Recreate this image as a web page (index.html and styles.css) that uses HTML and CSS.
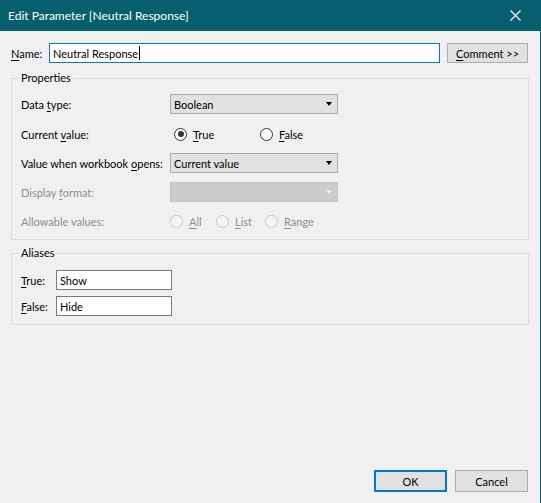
FILE: index.html
```html
<!DOCTYPE html>
<html lang="en">
<head>
  <meta charset="UTF-8">
  <title>Edit Parameter [Neutral Response]</title>
  <link rel="stylesheet" href="styles.css">
</head>
<body>
<div class="dialog">
  <div class="titlebar">
    <div class="title">Edit Parameter [Neutral Response]</div>
    <svg class="close" width="11" height="11" viewBox="0 0 11 11">
      <path d="M0.5 0.5 L10.5 10.5 M10.5 0.5 L0.5 10.5" stroke="#fff" stroke-width="1.1" fill="none"/>
    </svg>
  </div>

  <div class="content">
    <div class="name-row">
      <div class="name-label"><u>N</u>ame:</div>
      <div class="field name-field">Neutral Response<span class="caret"></span></div>
      <div class="btn comment-btn"><u>C</u>omment &gt;&gt;</div>
    </div>

    <fieldset class="group">
      <legend>Properties</legend>
      <div class="prop-row first">
        <div>Data <u>t</u>ype:</div>
        <div class="select"><span>Boolean</span><span class="arrow"></span></div>
      </div>
      <div class="prop-row">
        <div>Current <u>v</u>alue:</div>
        <div class="radios current">
          <div class="radio-opt w86"><span class="radio checked"></span><span><u>T</u>rue</span></div>
          <div class="radio-opt"><span class="radio"></span><span><u>F</u>alse</span></div>
        </div>
      </div>
      <div class="prop-row tight">
        <div>Value when workbook <u>o</u>pens:</div>
        <div class="select"><span>Current value</span><span class="arrow"></span></div>
      </div>
      <div class="prop-row tight disabled">
        <div>Display <u>f</u>ormat:</div>
        <div class="select"><span></span><span class="arrow"></span></div>
      </div>
      <div class="prop-row tight disabled">
        <div>Allowable values:</div>
        <div class="radios">
          <div class="radio-opt w46"><span class="radio"></span><span><u>A</u>ll</span></div>
          <div class="radio-opt w49"><span class="radio"></span><span><u>L</u>ist</span></div>
          <div class="radio-opt"><span class="radio"></span><span><u>R</u>ange</span></div>
        </div>
      </div>
    </fieldset>

    <fieldset class="group aliases">
      <legend>Aliases</legend>
      <div class="alias-row">
        <div><u>T</u>rue:</div>
        <div class="field alias-field">Show</div>
      </div>
      <div class="alias-row">
        <div><u>F</u>alse:</div>
        <div class="field alias-field">Hide</div>
      </div>
    </fieldset>

    <div class="footer">
      <div class="btn dlg-btn default">OK</div>
      <div class="btn dlg-btn">Cancel</div>
    </div>
  </div>
</div>
</body>
</html>
```

FILE: styles.css
```css
body {
  margin: 0;
  background-color: #f0f0f0;
  color: #000;
  font-family: Lato, "Noto Sans", sans-serif;
  font-size: 11px;
}
u {
  text-underline-offset: 2px;
}
.dialog {
  width: 541px;
  height: 503px;
  box-sizing: border-box;
  border-right: 1px solid #075e6e;
  display: flex;
  flex-direction: column;
}
.titlebar {
  height: 31px;
  flex: none;
  background-color: #075e6e;
  color: #fff;
  font-size: 12px;
  display: flex;
  align-items: center;
  justify-content: space-between;
  padding: 0 19px 0 8px;
}
.title {
  margin-top: -1px;
}
.close {
  display: block;
  margin-top: -1px;
}
.content {
  flex: 1;
  display: flex;
  flex-direction: column;
  padding: 12px 11px 11px 11px;
}
.name-row {
  display: flex;
  align-items: center;
  height: 20px;
}
.name-label {
  width: 38px;
}
.field {
  height: 20px;
  box-sizing: border-box;
  background-color: #fff;
  border: 1px solid #7a7a7a;
  padding: 0 3px;
  display: flex;
  align-items: center;
  white-space: nowrap;
}
.name-field {
  width: 391px;
  border-color: #0078d7;
}
.caret {
  display: inline-block;
  width: 1px;
  height: 14px;
  background-color: #000;
  margin-left: 1px;
}
.btn {
  box-sizing: border-box;
  background-color: #e1e1e1;
  border: 1px solid #adadad;
  display: flex;
  align-items: center;
  justify-content: center;
}
.comment-btn {
  width: 81px;
  height: 20px;
  margin-left: 7px;
}
.group {
  margin: 7px 0 0;
  padding: 8px 10px 8px 9px;
  border: 1px solid #dcdcdc;
  min-width: 0;
}
.group legend {
  padding: 0 2px;
  margin-left: -2px;
  line-height: 16px;
}
.prop-row {
  display: grid;
  grid-template-columns: 149px 168px;
  align-items: center;
  height: 20px;
  margin-top: 10px;
  white-space: nowrap;
}
.prop-row.first {
  margin-top: 0;
}
.prop-row.tight {
  margin-top: 9px;
}
.select {
  height: 20px;
  box-sizing: border-box;
  border: 1px solid #adadad;
  background-color: #e1e1e1;
  display: flex;
  align-items: center;
  justify-content: space-between;
  padding: 0 5px 0 3px;
}
.arrow {
  width: 0;
  height: 0;
  border-left: 3.5px solid transparent;
  border-right: 3.5px solid transparent;
  border-top: 4px solid #000;
}
.radios {
  display: flex;
  align-items: center;
}
.radios.current {
  padding-left: 4px;
}
.radio-opt {
  display: flex;
  align-items: center;
  gap: 6px;
}
.w86 { width: 86px; }
.w46 { width: 46px; }
.w49 { width: 49px; }
.radio {
  width: 13px;
  height: 13px;
  box-sizing: border-box;
  border: 1px solid #333;
  border-radius: 50%;
  background-color: #fff;
  display: flex;
  align-items: center;
  justify-content: center;
}
.radio.checked::after {
  content: "";
  width: 6px;
  height: 6px;
  border-radius: 50%;
  background-color: #333;
}
.disabled {
  color: #8d8d8d;
}
.disabled .select {
  background-color: #cccccc;
  border-color: #c4c4c4;
}
.disabled .arrow {
  border-top-color: #ececec;
}
.disabled .radio {
  border-color: #c6c6c6;
  background-color: #f4f4f4;
}
.aliases {
  margin-top: 5px;
  padding-top: 9px;
}
.alias-row {
  display: grid;
  grid-template-columns: 35px 116px;
  align-items: center;
  height: 20px;
}
.alias-row + .alias-row {
  margin-top: 6px;
}
.footer {
  margin-top: auto;
  display: flex;
  justify-content: flex-end;
  gap: 8px;
  padding-right: 1px;
}
.dlg-btn {
  width: 73px;
  height: 22px;
}
.dlg-btn.default {
  border: 2px solid #0078d7;
}
```
